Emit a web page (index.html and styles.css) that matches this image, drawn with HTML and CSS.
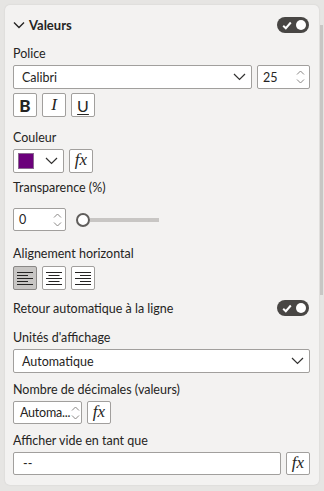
FILE: index.html
```html
<!DOCTYPE html>
<html lang="fr">
<head>
<meta charset="utf-8">
<link rel="stylesheet" href="styles.css">
</head>
<body>
<div class="card">
  <div class="header">
    <div class="title">
      <svg class="chev-head" width="12" height="12" viewBox="0 0 12 12"><polyline points="1,3.5 6,8.5 11,3.5" fill="none" stroke="#252423" stroke-width="1.4"/></svg>
      <span>Valeurs</span>
    </div>
    <div class="toggle">
      <svg width="10" height="9" viewBox="0 0 10 9"><polyline points="1.2,4.8 3.8,7.2 8.8,1.5" fill="none" stroke="#fff" stroke-width="2"/></svg>
      <span class="knob"></span>
    </div>
  </div>

  <div class="label l-police">Police</div>
  <div class="row">
    <div class="select grow">
      <span>Calibri</span>
      <svg width="13" height="8" viewBox="0 0 13 8"><polyline points="1,1 6.5,6.5 12,1" fill="none" stroke="#323130" stroke-width="1.2"/></svg>
    </div>
    <div class="spin size">
      <span>25</span>
      <svg class="arrows" width="9" height="16" viewBox="0 0 9 16"><polyline points="1,5.5 4.5,2 8,5.5" fill="none" stroke="#8a8886" stroke-width="1"/><polyline points="1,10.5 4.5,14 8,10.5" fill="none" stroke="#8a8886" stroke-width="1"/></svg>
    </div>
  </div>
  <div class="row r-biu">
    <div class="btn b-bold">B</div>
    <div class="btn b-ital">I</div>
    <div class="btn b-und">U</div>
  </div>

  <div class="label l-couleur">Couleur</div>
  <div class="row">
    <div class="color">
      <span class="swatch"></span>
      <svg width="13" height="8" viewBox="0 0 13 8"><polyline points="1,1 6.5,6.5 12,1" fill="none" stroke="#323130" stroke-width="1.2"/></svg>
    </div>
    <div class="btn fx">fx</div>
  </div>

  <div class="label l-trans">Transparence (%)</div>
  <div class="row r-slider">
    <div class="spin num">
      <span>0</span>
      <svg class="arrows" width="9" height="16" viewBox="0 0 9 16"><polyline points="1,5.5 4.5,2 8,5.5" fill="none" stroke="#8a8886" stroke-width="1"/><polyline points="1,10.5 4.5,14 8,10.5" fill="none" stroke="#8a8886" stroke-width="1"/></svg>
    </div>
    <div class="slider">
      <span class="thumb"></span>
      <span class="track"></span>
    </div>
  </div>

  <div class="label l-align">Alignement horizontal</div>
  <div class="row r-align">
    <div class="btn sel">
      <svg width="16" height="14" viewBox="0 0 16 14"><g stroke="#252423" stroke-width="1"><line x1="0" y1="1.5" x2="16" y2="1.5"/><line x1="0" y1="4.5" x2="11" y2="4.5"/><line x1="0" y1="7.5" x2="16" y2="7.5"/><line x1="0" y1="10.5" x2="11" y2="10.5"/><line x1="0" y1="13.5" x2="16" y2="13.5"/></g></svg>
    </div>
    <div class="btn">
      <svg width="16" height="14" viewBox="0 0 16 14"><g stroke="#252423" stroke-width="1"><line x1="0" y1="1.5" x2="16" y2="1.5"/><line x1="2.5" y1="4.5" x2="13.5" y2="4.5"/><line x1="0" y1="7.5" x2="16" y2="7.5"/><line x1="2.5" y1="10.5" x2="13.5" y2="10.5"/><line x1="0" y1="13.5" x2="16" y2="13.5"/></g></svg>
    </div>
    <div class="btn">
      <svg width="16" height="14" viewBox="0 0 16 14"><g stroke="#252423" stroke-width="1"><line x1="0" y1="1.5" x2="16" y2="1.5"/><line x1="5" y1="4.5" x2="16" y2="4.5"/><line x1="0" y1="7.5" x2="16" y2="7.5"/><line x1="5" y1="10.5" x2="16" y2="10.5"/><line x1="0" y1="13.5" x2="16" y2="13.5"/></g></svg>
    </div>
  </div>

  <div class="wrap-row">
    <span class="text">Retour automatique à la ligne</span>
    <div class="toggle">
      <svg width="10" height="9" viewBox="0 0 10 9"><polyline points="1.2,4.8 3.8,7.2 8.8,1.5" fill="none" stroke="#fff" stroke-width="2"/></svg>
      <span class="knob"></span>
    </div>
  </div>

  <div class="label l-units">Unités d'affichage</div>
  <div class="row">
    <div class="select grow">
      <span>Automatique</span>
      <svg width="13" height="8" viewBox="0 0 13 8"><polyline points="1,1 6.5,6.5 12,1" fill="none" stroke="#323130" stroke-width="1.2"/></svg>
    </div>
  </div>

  <div class="label l-dec">Nombre de décimales (valeurs)</div>
  <div class="row r-small">
    <div class="spin dec">
      <span>Automa...</span>
      <svg class="arrows" width="9" height="16" viewBox="0 0 9 16"><polyline points="1,5.5 4.5,2 8,5.5" fill="none" stroke="#8a8886" stroke-width="1"/><polyline points="1,10.5 4.5,14 8,10.5" fill="none" stroke="#8a8886" stroke-width="1"/></svg>
    </div>
    <div class="btn fx">fx</div>
  </div>

  <div class="label l-vide">Afficher vide en tant que</div>
  <div class="row r-small">
    <div class="input grow"><span>--</span></div>
    <div class="btn fx">fx</div>
  </div>

  <div class="scrollbar"></div>
</div>
</body>
</html>
```
FILE: styles.css
```css
* { box-sizing: border-box; }
html, body { margin: 0; padding: 0; }
body {
  background: #e6e5e3;
  font-family: "Lato", "Noto Sans", sans-serif;
  font-size: 12.5px;
  color: #252423;
  width: 324px;
  height: 491px;
  overflow: hidden;
}
.card {
  position: relative;
  margin: 5px 5px 0 5px;
  height: 480px;
  background: #f3f2f1;
  border-radius: 5px;
  box-shadow: 0 0 2px rgba(0,0,0,0.10);
  padding: 10px 9px 0 8px;
  display: flex;
  flex-direction: column;
}
.header {
  height: 20px;
  display: flex;
  align-items: center;
  justify-content: space-between;
  padding-right: 1px;
}
.title {
  display: flex;
  align-items: center;
  gap: 4px;
  font-weight: 700;
  font-size: 13px;
}
.toggle {
  width: 32px;
  height: 16px;
  border-radius: 8px;
  background: #484644;
  display: flex;
  align-items: center;
  justify-content: space-between;
  padding: 0 3px 0 5px;
}
.knob {
  width: 10px;
  height: 10px;
  border-radius: 50%;
  background: #fff;
}
.label {
  height: 18px;
  padding-top: 3px;
  line-height: 16px;
}
.l-police { margin-top: 8px; }
.l-couleur { margin-top: 10px; }
.l-trans { margin-top: 4px; }
.l-align { margin-top: 12px; }
.l-units { margin-top: 11px; }
.l-dec { margin-top: 6px; }
.l-vide { margin-top: 6px; }
.row {
  display: flex;
  gap: 5px;
  margin-top: 4px;
  height: 24px;
}
.r-slider { margin-top: 13px; height: 23px; align-items: center; }
.r-align { margin-top: 5px; }
.r-small { height: 23px; }
.grow { flex: 1; }
.select, .input, .spin, .color {
  background: #fff;
  border: 1px solid #a19f9d;
  border-radius: 2px;
  display: flex;
  align-items: center;
  justify-content: space-between;
  padding: 0 4px 0 8px;
  color: #252423;
}
.select svg { margin-right: 1px; }
.size { width: 53px; padding-left: 5px; }
.num { width: 53px; height: 23px; padding-left: 5px; padding-right: 3px; }
.dec { width: 69px; padding-left: 6px; padding-right: 1px; }
.dec span { letter-spacing: -0.2px; }
.input { padding-left: 9px; }
.btn {
  width: 24px;
  height: 100%;
  background: #fff;
  border: 1px solid #a19f9d;
  border-radius: 2px;
  display: flex;
  align-items: center;
  justify-content: center;
}
.btn.sel { background: #c8c6c4; border-color: #8a8886; }
.b-bold { font-weight: 900; font-size: 17px; font-family: "Lato", sans-serif; }
.b-ital { font-family: "Liberation Serif", serif; font-style: italic; font-size: 17px; }
.b-und { text-decoration: underline; text-underline-offset: 2px; font-size: 16px; }
.fx { font-family: "Liberation Serif", serif; font-style: italic; font-size: 17px; padding-bottom: 2px; }
.color { width: 51px; padding: 0 5px 0 4px; }
.swatch {
  width: 16px;
  height: 16px;
  background: #6b007b;
  border: 1px solid #8a6a8f;
}
.slider {
  display: flex;
  align-items: center;
  margin-left: 5px;
}
.thumb {
  width: 14px;
  height: 14px;
  border: 2px solid #605e5c;
  border-radius: 50%;
  background: #fff;
}
.track {
  width: 69px;
  height: 4px;
  background: #c8c6c4;
}
.wrap-row {
  margin-top: 10px;
  height: 16px;
  display: flex;
  align-items: center;
  justify-content: space-between;
  padding-right: 1px;
}
.scrollbar {
  position: absolute;
  right: -4px;
  top: 20px;
  width: 3px;
  height: 270px;
  background: #c8c6c4;
}
```
